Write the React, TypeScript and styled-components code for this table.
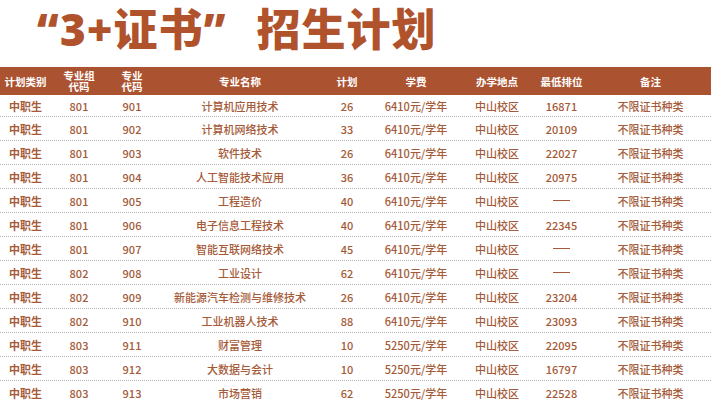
import React from "react";
import styled, { createGlobalStyle } from "styled-components";

const Global = createGlobalStyle`
  html, body { margin: 0; padding: 0; background: #ffffff; }
  body { font-family: "Noto Sans CJK SC", "Noto Sans", sans-serif; overflow: hidden; }
`;

const Page = styled.div`
  width: 713px;
  height: 403px;
  overflow: hidden;
  background: #fff;
`;

const Title = styled.h1`
  margin: 0;
  height: 67px;
  box-sizing: border-box;
  padding: 1px 0 0 37px;
  font-family: "Noto Sans", "Noto Sans CJK SC", sans-serif;
  font-weight: 900;
  font-size: 44px;
  line-height: 56px;
  letter-spacing: 1px;
  color: #b0532d;
  white-space: nowrap;
`;

const Gap = styled.span`
  display: inline-block;
  width: 30px;
`;

const Table = styled.div`
  width: 711px;
  display: flex;
  flex-direction: column;
`;

const cols = "51px 56px 50px 166px 48px 90px 72px 57px 121px";

const HeadRow = styled.div`
  display: grid;
  grid-template-columns: ${cols};
  height: 28px;
  background: #ab5230;
  color: #fff;
  font-weight: 700;
  font-size: 10.5px;
  line-height: 11px;
`;

const HeadCell = styled.div`
  display: flex;
  align-items: center;
  justify-content: center;
  text-align: center;
  white-space: pre-line;
`;

const Row = styled.div<{ $first?: boolean }>`
  display: grid;
  grid-template-columns: ${cols};
  height: ${(p) => (p.$first ? "21px" : "23px")};
  border-bottom: 1px dotted #b9b2ae;
  color: #a55a38;
  font-size: 11px;
`;

const Cell = styled.div<{ $bold?: boolean }>`
  display: flex;
  align-items: center;
  justify-content: center;
  white-space: nowrap;
  font-weight: ${(p) => (p.$bold ? 700 : 500)};
`;

const Dash = styled.span`
  display: inline-block;
  width: 17px;
  height: 1px;
  background: #a55a38;
`;

const headers = ["计划类别", "专业组\n代码", "专业\n代码", "专业名称", "计划", "学费", "办学地点", "最低排位", "备注"];

type R = [string, string, string, string, string, string];
const rows: R[] = [
  ["801", "901", "计算机应用技术", "26", "6410元/学年", "16871"],
  ["801", "902", "计算机网络技术", "33", "6410元/学年", "20109"],
  ["801", "903", "软件技术", "26", "6410元/学年", "22027"],
  ["801", "904", "人工智能技术应用", "36", "6410元/学年", "20975"],
  ["801", "905", "工程造价", "40", "6410元/学年", "-"],
  ["801", "906", "电子信息工程技术", "40", "6410元/学年", "22345"],
  ["801", "907", "智能互联网络技术", "45", "6410元/学年", "-"],
  ["802", "908", "工业设计", "62", "6410元/学年", "-"],
  ["802", "909", "新能源汽车检测与维修技术", "26", "6410元/学年", "23204"],
  ["802", "910", "工业机器人技术", "88", "6410元/学年", "23093"],
  ["803", "911", "财富管理", "10", "5250元/学年", "22095"],
  ["803", "912", "大数据与会计", "10", "5250元/学年", "16797"],
  ["803", "913", "市场营销", "62", "5250元/学年", "22528"],
];

export default function App() {
  return (
    <Page>
      <Global />
      <Title>
        “3+证书”<Gap />招生计划
      </Title>
      <Table>
        <HeadRow>
          {headers.map((h) => (
            <HeadCell key={h}>{h}</HeadCell>
          ))}
        </HeadRow>
        {rows.map((r, i) => (
          <Row key={r[1]} $first={i === 0}>
            <Cell $bold>中职生</Cell>
            <Cell>{r[0]}</Cell>
            <Cell>{r[1]}</Cell>
            <Cell>{r[2]}</Cell>
            <Cell>{r[3]}</Cell>
            <Cell>{r[4]}</Cell>
            <Cell>中山校区</Cell>
            <Cell>{r[5] === "-" ? <Dash /> : r[5]}</Cell>
            <Cell>不限证书种类</Cell>
          </Row>
        ))}
      </Table>
    </Page>
  );
}
